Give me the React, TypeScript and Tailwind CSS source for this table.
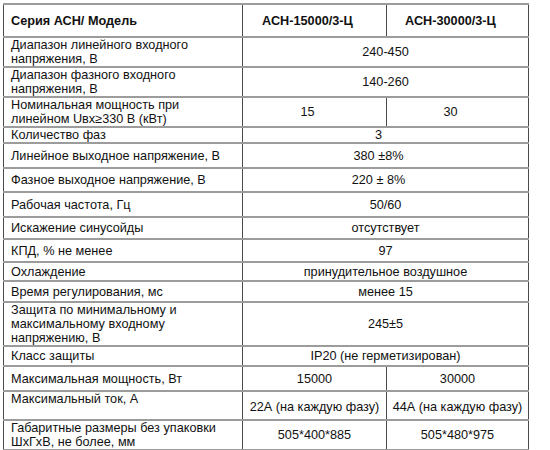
type Row = {
  label: string[];
  h: number;
  values: string[]; // 1 value = merged, 2 = split
  shift?: boolean; // value drawn slightly left of centre, as in the source document
  top?: boolean;
};

// h = distance between the centres of the row's top and bottom rules
const rows: Row[] = [
  { label: ['Диапазон линейного входного', 'напряжения, В'], h: 30, values: ['240-450'] },
  { label: ['Диапазон фазного входного', 'напряжения, В'], h: 30, values: ['140-260'] },
  { label: ['Номинальная мощность при', 'линейном Uвх≥330 В (кВт)'], h: 30, values: ['15', '30'], shift: true },
  { label: ['Количество фаз'], h: 16, values: ['3'], shift: true },
  { label: ['Линейное выходное напряжение, В'], h: 25, values: ['380 ±8%'], shift: true },
  { label: ['Фазное выходное напряжение, В'], h: 24, values: ['220 ± 8%'], shift: true },
  { label: ['Рабочая частота, Гц'], h: 25, values: ['50/60'] },
  { label: ['Искажение синусойды'], h: 22, values: ['отсутствует'] },
  { label: ['КПД, % не менее'], h: 23, values: ['97'] },
  { label: ['Охлаждение'], h: 19, values: ['принудительное воздушное'] },
  { label: ['Время регулирования, мс'], h: 21, values: ['менее 15'] },
  { label: ['Защита по минимальному и', 'максимальному входному', 'напряжению, В'], h: 44, values: ['245±5'] },
  { label: ['Класс защиты'], h: 20, values: ['IP20 (не герметизирован)'] },
  { label: ['Максимальная мощность, Вт'], h: 25, values: ['15000', '30000'] },
  { label: ['Максимальный ток, А'], h: 29, values: ['22А (на каждую фазу)', '44А (на каждую фазу)'], top: true },
  { label: ['Габаритные размеры без упаковки', 'ШхГхВ, не более, мм'], h: 29, values: ['505*400*885', '505*480*975'] },
];

const cell =
  'border-y-2 border-y-[#9c9c9c] border-x border-x-[#4a4a4a] p-0 text-[12.7px] leading-[14px]';

export default function App() {
  return (
    <div
      className="min-h-[450px] bg-white pl-[3px] pt-[3px] text-[#111]"
      style={{ fontFamily: '"Liberation Sans", Arial, sans-serif' }}
    >
      <table className="w-[525px] table-fixed border-collapse">
        <colgroup>
          <col className="w-[239px]" />
          <col className="w-[144px]" />
          <col className="w-[142px]" />
        </colgroup>
        <tbody>
          <tr className="h-[33px]">
            <td className={`${cell} pl-[7px] align-middle font-bold`}>Серия АСН/ Модель</td>
            <td className={`${cell} pr-[14px] text-center align-middle font-bold`}>АСН-15000/3-Ц</td>
            <td className={`${cell} pr-[14px] text-center align-middle font-bold`}>АСН-30000/3-Ц</td>
          </tr>
          {rows.map((r, i) => (
            <tr key={i} style={{ height: r.h }}>
              <td className={`${cell} pl-[7px] ${r.top ? 'align-top' : 'align-middle'}`}>
                {r.label.map((l, j) => (
                  <div key={j}>{l}</div>
                ))}
              </td>
              {r.values.length === 1 ? (
                <td
                  colSpan={2}
                  className={`${cell} text-center align-middle ${r.shift ? 'pr-[14px]' : ''}`}
                >
                  {r.values[0]}
                </td>
              ) : (
                r.values.map((v, j) => (
                  <td
                    key={j}
                    className={`${cell} text-center align-middle ${r.shift ? 'pr-[14px]' : ''} ${
                      r.top ? 'pt-[3px]' : ''
                    }`}
                  >
                    {v}
                  </td>
                ))
              )}
            </tr>
          ))}
        </tbody>
      </table>
    </div>
  );
}
